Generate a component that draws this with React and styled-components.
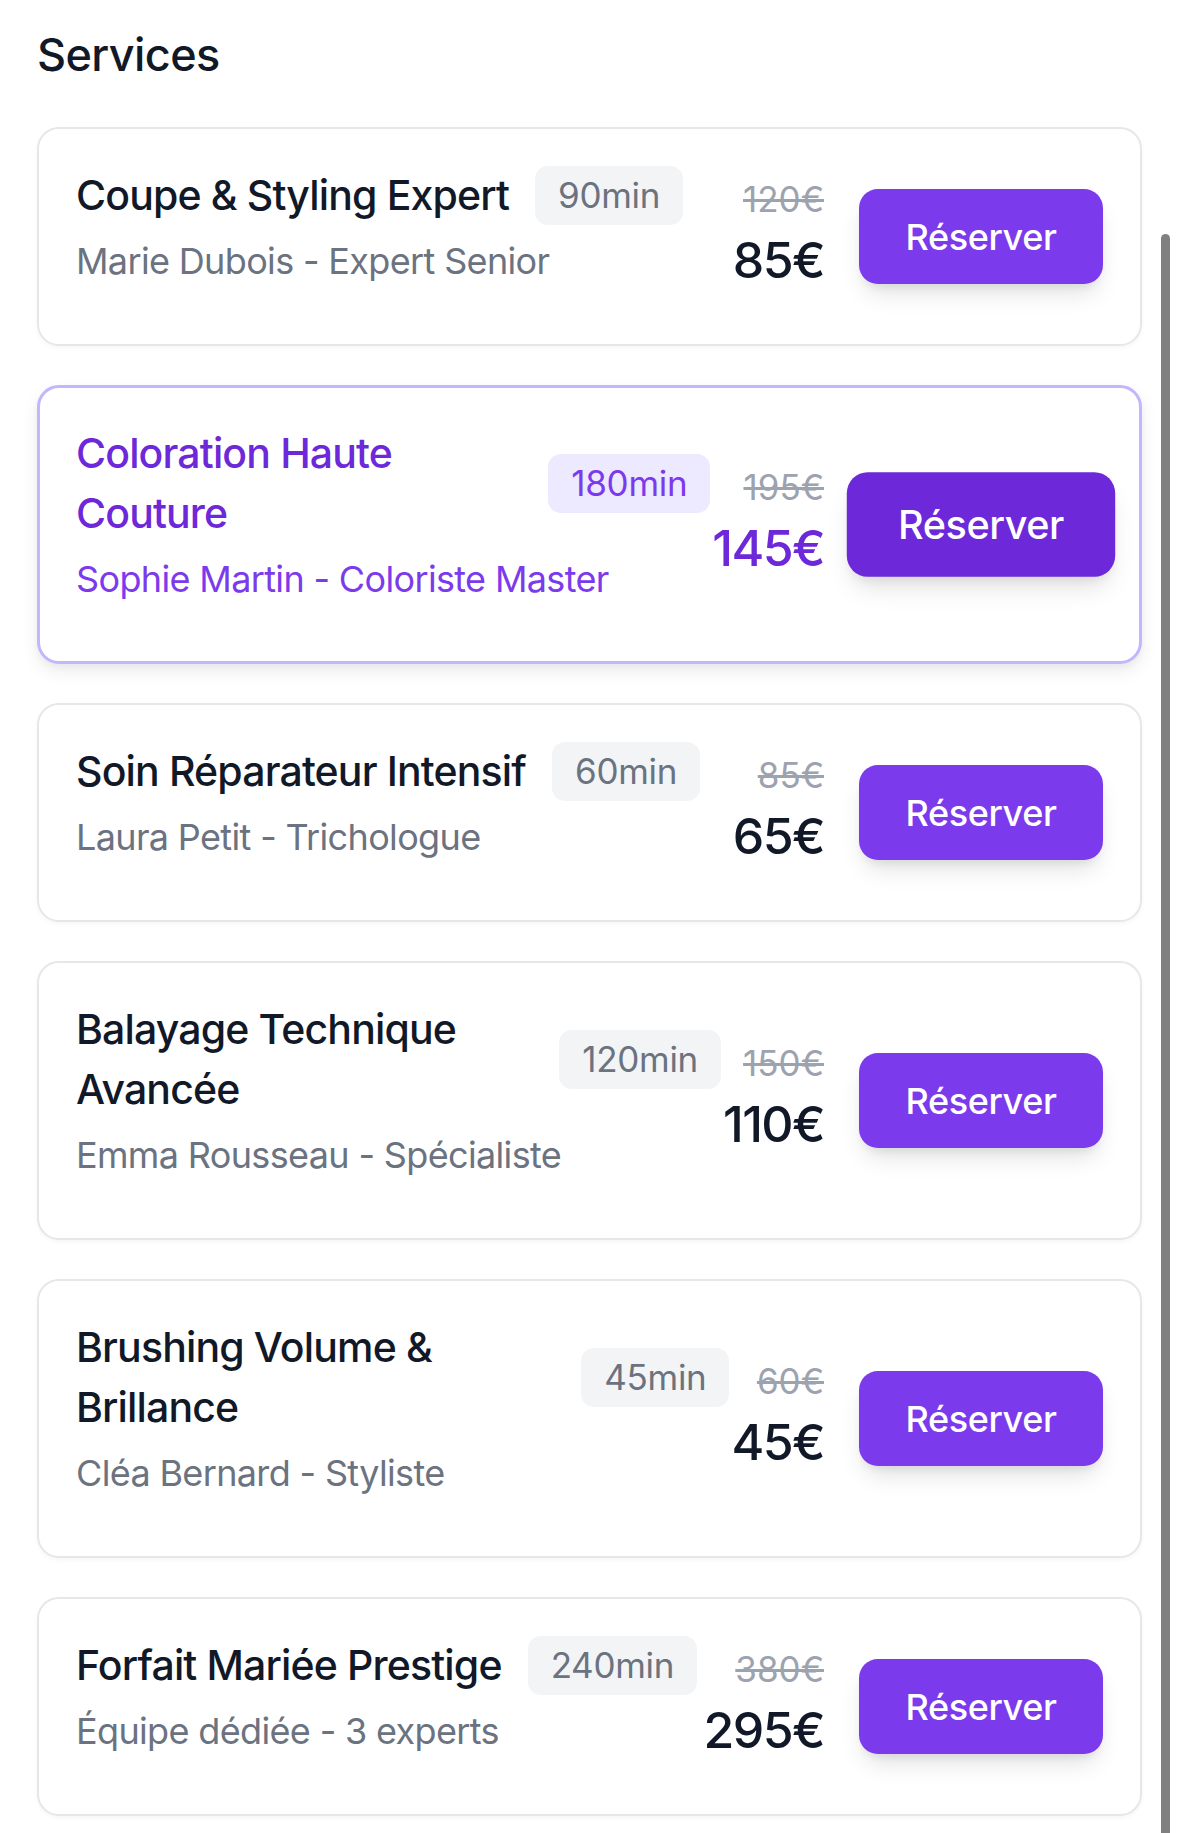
import React from 'react'
import styled, { createGlobalStyle, css } from 'styled-components'

const GlobalStyle = createGlobalStyle`
  * { box-sizing: border-box; }
  body {
    margin: 0;
    background: #ffffff;
    font-family: Inter, "Noto Sans", "Liberation Sans", sans-serif;
  }
`

const Page = styled.div`
  position: relative;
  min-height: 1833px;
  padding: 27px 37px 18px;
`

const Heading = styled.h2`
  margin: 0 0 44px;
  font-size: 45px;
  line-height: 56px;
  font-weight: 500;
  color: #111827;
  letter-spacing: -0.6px;
`

const List = styled.div`
  display: flex;
  flex-direction: column;
  gap: 39px;
`

const Card = styled.div`
  display: flex;
  align-items: center;
  padding: 36px 37px 56px 37px;
  background: #ffffff;
  border: 2px solid #e5e7eb;
  border-radius: 22px;
  box-shadow: 0 2px 4px rgba(0, 0, 0, 0.04);

  ${({ $active }) =>
    $active &&
    css`
      border: 3px solid #c4b5fd;
      padding: 35px 36px 55px 36px;
      box-shadow: 0 8px 18px rgba(0, 0, 0, 0.07), 0 3px 6px rgba(0, 0, 0, 0.04);
    `}
`

const Info = styled.div`
  flex: 1;
  min-width: 0;
  align-self: flex-start;
`

const TitleRow = styled.div`
  display: flex;
  align-items: center;
  gap: 26px;
`

const Title = styled.h3`
  margin: 0;
  flex: 0 1 auto;
  font-size: 41px;
  line-height: 60px;
  font-weight: 500;
  letter-spacing: -0.85px;
  color: ${({ $active }) => ($active ? '#6d28d9' : '#111827')};
`

const Badge = styled.span`
  flex-shrink: 0;
  padding: 7px 23px;
  border-radius: 13px;
  font-size: 35px;
  line-height: 45px;
  letter-spacing: -0.3px;
  background: ${({ $active }) => ($active ? '#ede9fe' : '#f3f4f6')};
  color: ${({ $active }) => ($active ? '#7c3aed' : '#6b7280')};
`

const Expert = styled.p`
  margin: 9px 0 0;
  font-size: 36px;
  line-height: 54px;
  letter-spacing: -0.65px;
  color: ${({ $active }) => ($active ? '#7c3aed' : '#6b7280')};
`

const Side = styled.div`
  display: flex;
  align-items: center;
  gap: 38px;
  margin-left: 2px;
  margin-bottom: -20px;
`

const Prices = styled.div`
  display: flex;
  flex-direction: column;
  align-items: flex-end;
  margin-right: -3px;
  margin-top: 4px;
`

const OldPrice = styled.span`
  font-size: 35px;
  line-height: 42px;
  color: #9ca3af;
  text-decoration: line-through;
`

const Price = styled.span`
  font-size: 50px;
  line-height: 80px;
  font-weight: 500;
  letter-spacing: -1.6px;
  color: ${({ $active }) => ($active ? '#6d28d9' : '#111827')};
`

const BookButton = styled.button`
  width: 244px;
  height: 95px;
  border: none;
  border-radius: 19px;
  font-family: inherit;
  font-size: 36px;
  font-weight: 500;
  letter-spacing: -0.4px;
  color: #ffffff;
  background: ${({ $active }) => ($active ? '#6d28d9' : '#7c3aed')};
  box-shadow: 0 14px 24px -6px rgba(0, 0, 0, 0.13), 0 6px 10px -4px rgba(0, 0, 0, 0.08);
  transform: ${({ $active }) => ($active ? 'scale(1.1)' : 'none')};
  cursor: pointer;
`

const ScrollThumb = styled.div`
  position: absolute;
  top: 234px;
  bottom: 0;
  right: 9px;
  width: 9px;
  border-radius: 5px 5px 0 0;
  background: #808080;
`

const services = [
  { name: 'Coupe & Styling Expert', duration: '90min', old: '120€', price: '85€', expert: 'Marie Dubois - Expert Senior' },
  { name: 'Coloration Haute Couture', duration: '180min', old: '195€', price: '145€', expert: 'Sophie Martin - Coloriste Master', active: true },
  { name: 'Soin Réparateur Intensif', duration: '60min', old: '85€', price: '65€', expert: 'Laura Petit - Trichologue' },
  { name: 'Balayage Technique Avancée', duration: '120min', old: '150€', price: '110€', expert: 'Emma Rousseau - Spécialiste' },
  { name: 'Brushing Volume & Brillance', duration: '45min', old: '60€', price: '45€', expert: 'Cléa Bernard - Styliste' },
  { name: 'Forfait Mariée Prestige', duration: '240min', old: '380€', price: '295€', expert: 'Équipe dédiée - 3 experts' },
]

export default function App() {
  return (
    <Page>
      <GlobalStyle />
      <Heading>Services</Heading>
      <List>
        {services.map((s) => (
          <Card key={s.name} $active={s.active}>
            <Info>
              <TitleRow>
                <Title $active={s.active}>{s.name}</Title>
                <Badge $active={s.active}>{s.duration}</Badge>
              </TitleRow>
              <Expert $active={s.active}>{s.expert}</Expert>
            </Info>
            <Side>
              <Prices>
                <OldPrice>{s.old}</OldPrice>
                <Price $active={s.active}>{s.price}</Price>
              </Prices>
              <BookButton $active={s.active}>Réserver</BookButton>
            </Side>
          </Card>
        ))}
      </List>
      <ScrollThumb />
    </Page>
  )
}
